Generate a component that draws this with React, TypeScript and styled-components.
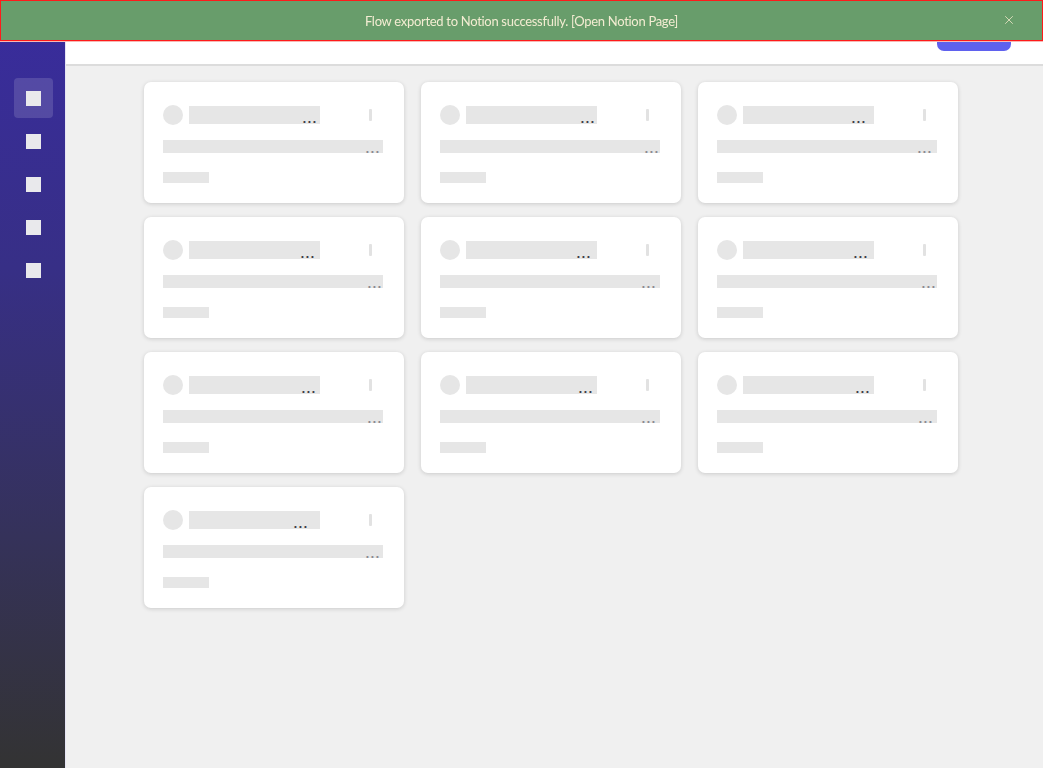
import React, { FC } from 'react';
import styled, { createGlobalStyle } from 'styled-components';
import { X } from 'lucide-react';

const GlobalStyle = createGlobalStyle`
  html, body {
    margin: 0;
    padding: 0;
    height: 100%;
    background: #f0f0f0;
    font-family: Lato, 'Noto Sans', sans-serif;
  }
  #root {
    height: 100%;
  }
  * {
    box-sizing: border-box;
  }
`;

interface CardData {
  titleDots: number;
  lineDots: number;
}

const cards: CardData[] = [
  { titleDots: 2, lineDots: 2 },
  { titleDots: 1, lineDots: 0 },
  { titleDots: 7, lineDots: 4 },
  { titleDots: 4, lineDots: 0 },
  { titleDots: 5, lineDots: 3 },
  { titleDots: 5, lineDots: 0 },
  { titleDots: 3, lineDots: 0 },
  { titleDots: 3, lineDots: 3 },
  { titleDots: 3, lineDots: 3 },
  { titleDots: 11, lineDots: 2 }
];

const navItems = [true, false, false, false, false];

const SkeletonCard: FC<{ card: CardData }> = ({ card }) => (
  <Card>
    <CardHeader>
      <Avatar />
      <TitleBar>
        <Dots $dark $offset={card.titleDots}>...</Dots>
      </TitleBar>
      <MenuSlot>
        <MenuTick />
      </MenuSlot>
    </CardHeader>
    <LineBar>
      <Dots $offset={card.lineDots}>...</Dots>
    </LineBar>
    <TagBar />
  </Card>
);

const App: FC = () => (
  <>
    <GlobalStyle />
    <Layout>
      <Sidebar>
        {navItems.map((active, i) => (
          <NavItem key={i} $active={active}>
            <NavIcon />
          </NavItem>
        ))}
      </Sidebar>
      <Main>
        <Header>
          <PrimaryButton />
        </Header>
        <Content>
          <Grid>
            {cards.map((card, i) => (
              <SkeletonCard key={i} card={card} />
            ))}
          </Grid>
        </Content>
      </Main>
    </Layout>
    <Toast>
      <ToastText>Flow exported to Notion successfully. [Open Notion Page]</ToastText>
      <CloseButton>
        <X size={14} strokeWidth={1.5} />
      </CloseButton>
    </Toast>
  </>
);

export default App;

const Layout = styled('div')`
  display: flex;
  height: 768px;
  overflow: hidden;
`;

const Sidebar = styled('nav')`
  width: 66px;
  flex-shrink: 0;
  display: flex;
  flex-direction: column;
  align-items: center;
  gap: 3px;
  padding: 78px 0 0 1px;
  background: linear-gradient(180deg, #392c9e 0%, #372f86 35%, #35325a 70%, #333333 100%);
  border-right: 1px solid #e6e4f4;
`;

const NavItem = styled('div')<{ $active: boolean }>`
  width: 39px;
  height: 40px;
  border-radius: 4px;
  display: flex;
  align-items: center;
  justify-content: center;
  background: ${({ $active }) => ($active ? 'rgba(255, 255, 255, 0.14)' : 'transparent')};
`;

const NavIcon = styled('div')`
  width: 15px;
  height: 15px;
  background: #e9e9ec;
`;

const Main = styled('main')`
  flex: 1;
  display: flex;
  flex-direction: column;
  min-width: 0;
`;

const Header = styled('header')`
  height: 66px;
  flex-shrink: 0;
  background: #ffffff;
  border-bottom: 2px solid #dcdcdc;
  display: flex;
  justify-content: flex-end;
  align-items: flex-start;
  padding: 17px 32px 0 0;
`;

const PrimaryButton = styled('div')`
  width: 74px;
  height: 34px;
  border-radius: 7px;
  background: #5f61ee;
`;

const Content = styled('div')`
  flex: 1;
  padding: 16px 0 0 78px;
`;

const Grid = styled('div')`
  display: grid;
  grid-template-columns: repeat(3, 260px);
  column-gap: 17px;
  row-gap: 14px;
`;

const Card = styled('div')`
  height: 121px;
  background: #ffffff;
  border-radius: 7px;
  box-shadow: 0 1px 4px rgba(0, 0, 0, 0.16);
  padding: 23px 21px 0 19px;
  display: flex;
  flex-direction: column;
`;

const CardHeader = styled('div')`
  display: flex;
  align-items: center;
  height: 20px;
`;

const Avatar = styled('div')`
  width: 20px;
  height: 20px;
  border-radius: 50%;
  background: #e6e6e6;
  flex-shrink: 0;
`;

const TitleBar = styled('div')`
  width: 131px;
  height: 18px;
  margin-left: 6px;
  background: #e6e6e6;
  display: flex;
  justify-content: flex-end;
  align-items: flex-end;
  padding-bottom: 2px;
`;

const MenuSlot = styled('div')`
  margin-left: auto;
  width: 26px;
  display: flex;
  justify-content: center;
`;

const MenuTick = styled('div')`
  width: 3px;
  height: 12px;
  border-radius: 1px;
  background: #e2e2e2;
`;

const LineBar = styled('div')`
  margin-top: 15px;
  height: 13px;
  background: #e6e6e6;
  display: flex;
  justify-content: flex-end;
  align-items: flex-end;
  padding-bottom: 1px;
`;

const Dots = styled('span')<{ $dark?: boolean; $offset: number }>`
  font-size: 14px;
  font-weight: 700;
  letter-spacing: 1.8px;
  line-height: 8px;
  height: 8px;
  color: ${({ $dark }) => ($dark ? '#3c3c44' : '#8a8a8f')};
  margin-right: ${({ $offset }) => $offset}px;
`;

const TagBar = styled('div')`
  margin-top: 19px;
  width: 46px;
  height: 11px;
  background: #e6e6e6;
`;

const Toast = styled('div')`
  position: fixed;
  top: 0;
  left: 0;
  right: 0;
  height: 41px;
  background: #689d6b;
  border: 1px solid #ff1a1a;
  box-shadow: 0 1px 0 #f6b9b4;
  display: flex;
  align-items: center;
  justify-content: center;
  z-index: 10;
`;

const ToastText = styled('span')`
  color: #f3ecd2;
  font-size: 13px;
  letter-spacing: -0.3px;
`;

const CloseButton = styled('div')`
  position: absolute;
  right: 26px;
  top: 12px;
  color: #e3e0c0;
  display: flex;
`;
